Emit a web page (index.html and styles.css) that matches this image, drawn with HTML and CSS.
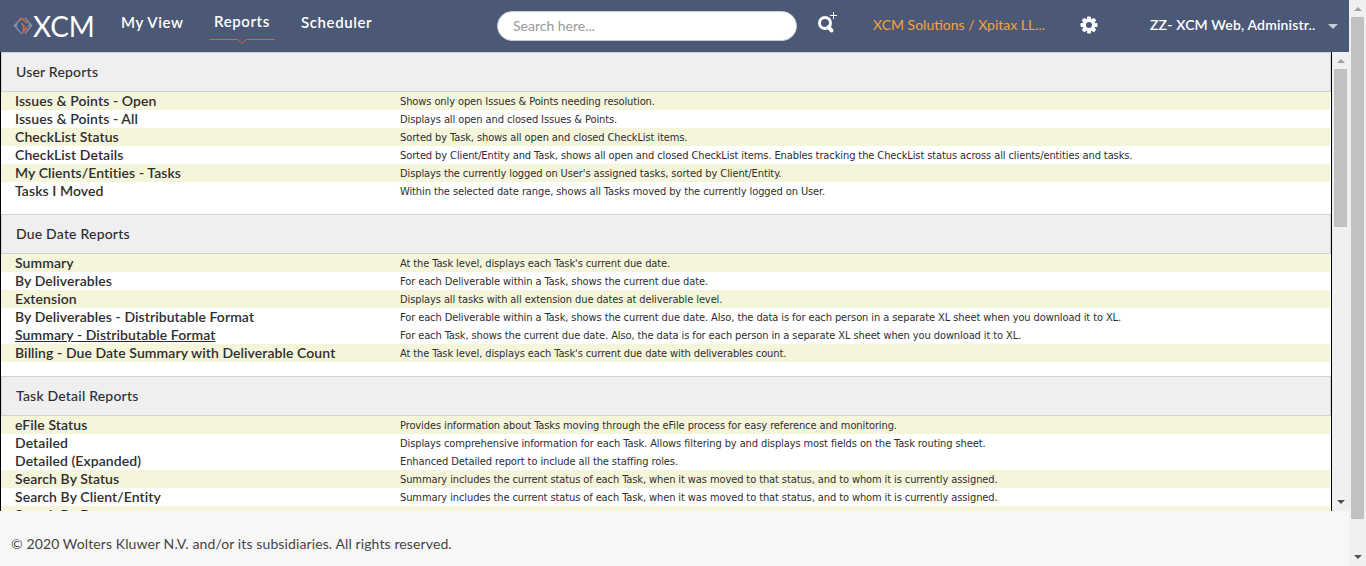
FILE: index.html
```html
<!DOCTYPE html>
<html lang="en">
<head>
<meta charset="utf-8">
<title>Reports</title>
<link rel="stylesheet" href="styles.css">
</head>
<body>
<div class="page">
  <header class="topbar">
    <div class="logo">
      <svg width="20" height="22" viewBox="0 0 20 22"><g fill="none"><path d="M8.500 3 1.500 10.500l7 8M12 3l6.500 7.500-6.500 8M1.500 10.500h5M14 10.500h4.500" stroke="#8b909c" stroke-width="1.400"/><path d="M10 6l4 4.500-4 6" stroke="#285b8c" stroke-width="2"/><path d="M9 6l-3.500 5 3.500 6" stroke="#285b8c" stroke-width="2"/><path d="M6 6l3-2.500 5 5M8 8l3 3-1 6 4-5" stroke="#dc6042" stroke-width="1.600"/></g></svg>
      <span class="logo-text">XCM</span>
    </div>
    <nav class="nav">
      <a class="nav-item view"><span>My View</span></a>
      <a class="nav-item active"><span>Reports</span><svg class="marker" width="66" height="6" viewBox="0 0 66 6"><path d="M0 .5h28.500l4.500 4 4.500-4H66" fill="none" stroke="#dc6042"/></svg></a>
      <a class="nav-item sched"><span>Scheduler</span></a>
    </nav>
    <div class="search">Search here...</div>
    <svg class="find" width="22" height="24" viewBox="0 0 22 24"><g fill="none" stroke="#fff"><circle cx="9" cy="13" r="5.500" stroke-width="3"/><path d="M12.500 17l3 3.500" stroke-width="4" stroke-linecap="round"/><path d="M17.500 2v7M14 5.500h7"/></g></svg>
    <div class="company">XCM Solutions / Xpitax LL...</div>
    <svg class="gear" width="18" height="18" viewBox="0 0 18 18"><g fill="#fff"><g id="teeth"><rect x="7" y="0.500" width="4" height="17" rx="1"/><rect x="0.500" y="7" width="17" height="4" rx="1"/></g><use href="#teeth" transform="rotate(45 9 9)"/><circle cx="9" cy="9" r="6.500"/></g><circle cx="9" cy="9" r="3" fill="#4c5976"/></svg>
    <div class="user">ZZ- XCM Web, Administr..</div>
    <i class="caret"></i>
  </header>

  <main class="frame">
    <div class="reports">
      <section class="group">
        <h2>User Reports</h2>
        <div class="row"><a>Issues &amp; Points - Open</a><p>Shows only open Issues &amp; Points needing resolution.</p></div>
        <div class="row"><a>Issues &amp; Points - All</a><p>Displays all open and closed Issues &amp; Points.</p></div>
        <div class="row"><a>CheckList Status</a><p>Sorted by Task, shows all open and closed CheckList items.</p></div>
        <div class="row"><a>CheckList Details</a><p>Sorted by Client/Entity and Task, shows all open and closed CheckList items. Enables tracking the CheckList status across all clients/entities and tasks.</p></div>
        <div class="row"><a>My Clients/Entities - Tasks</a><p>Displays the currently logged on User's assigned tasks, sorted by Client/Entity.</p></div>
        <div class="row"><a>Tasks I Moved</a><p>Within the selected date range, shows all Tasks moved by the currently logged on User.</p></div>
      </section>
      <section class="group">
        <h2>Due Date Reports</h2>
        <div class="row"><a>Summary</a><p>At the Task level, displays each Task's current due date.</p></div>
        <div class="row"><a>By Deliverables</a><p>For each Deliverable within a Task, shows the current due date.</p></div>
        <div class="row"><a>Extension</a><p>Displays all tasks with all extension due dates at deliverable level.</p></div>
        <div class="row"><a>By Deliverables - Distributable Format</a><p>For each Deliverable within a Task, shows the current due date. Also, the data is for each person in a separate XL sheet when you download it to XL.</p></div>
        <div class="row hover"><a>Summary - Distributable Format</a><p>For each Task, shows the current due date. Also, the data is for each person in a separate XL sheet when you download it to XL.</p></div>
        <div class="row shaded"><a>Billing - Due Date Summary with Deliverable Count</a><p>At the Task level, displays each Task's current due date with deliverables count.</p></div>
      </section>
      <section class="group">
        <h2>Task Detail Reports</h2>
        <div class="row"><a>eFile Status</a><p>Provides information about Tasks moving through the eFile process for easy reference and monitoring.</p></div>
        <div class="row"><a>Detailed</a><p>Displays comprehensive information for each Task. Allows filtering by and displays most fields on the Task routing sheet.</p></div>
        <div class="row plain"><a>Detailed (Expanded)</a><p>Enhanced Detailed report to include all the staffing roles.</p></div>
        <div class="row shaded"><a>Search By Status</a><p>Summary includes the current status of each Task, when it was moved to that status, and to whom it is currently assigned.</p></div>
        <div class="row plain"><a>Search By Client/Entity</a><p>Summary includes the current status of each Task, when it was moved to that status, and to whom it is currently assigned.</p></div>
        <div class="row shaded"><a>Search By Due</a><p>Includes the search by date for performance within the due date range and the total number of tasks for the client.</p></div>
      </section>
    </div>
    <div class="scrollbar inner"><i class="up"></i><b class="thumb"></b><i class="down"></i></div>
  </main>
  <footer class="footer"><span>© 2020 Wolters Kluwer N.V. and/or its subsidiaries. All rights reserved.</span></footer>
</div>
<div class="scrollbar outer"><i class="up"></i><b class="thumb"></b><i class="down"></i></div>
</body>
</html>
```
FILE: styles.css
```css
* { box-sizing: border-box; }
body { margin: 0; width: 1366px; height: 566px; overflow: hidden; display: flex; background: #f7f7f7; font-family: Lato, sans-serif; color: #2e2e2e; }
.page { width: 1349px; height: 566px; display: flex; flex-direction: column; }
.topbar { height: 52px; background: #4c5976; display: flex; align-items: flex-start; color: #fff; white-space: nowrap; flex: none; }
.logo { display: flex; width: 121px; padding: 15px 0 0 13px; }
.logo-text { font-size: 28px; line-height: 22px; letter-spacing: -0.2px; }
.nav { display: flex; width: 376px; font-size: 15px; font-weight: 600; line-height: 18px; letter-spacing: 0.6px; }
.nav-item { display: flex; flex-direction: column; padding-top: 13px; }
.view { width: 88px; }
.active { width: 92px; padding-top: 12px; }
.active span { padding-left: 5px; }
.marker { margin-top: 9px; }
.search { width: 300px; height: 30px; margin-top: 11px; border-radius: 15px; background: #fff; border: 1px solid #c8ccd6; color: #999; font-size: 14px; line-height: 28px; padding-left: 15px; }
.find { margin: 10px 0 0 19px; width: 22px; }
.company { width: 207px; margin-left: 35px; padding-top: 16px; font-size: 14px; line-height: 18px; color: #f2a43c; }
.gear { margin-top: 16px; }
.user { width: 178px; margin-left: 52px; padding-top: 16px; font-size: 14px; line-height: 18px; font-weight: 600; letter-spacing: 0.15px; }
.caret { margin-top: 24px; border: 5px solid transparent; border-top-color: #c9cdd6; border-bottom: 0; }
.frame { height: 459px; display: flex; background: #fff; overflow: hidden; flex: none; }
.reports { width: 1332px; border: solid #000; border-width: 0 1px; }
.group { height: 162px; }
.group h2 { height: 40px; margin: 0; border: 1px solid #d2d2d2; background: #efefef; padding-left: 14px; font-size: 14px; line-height: 37px; font-weight: 500; letter-spacing: 0.2px; }
.row { height: 18px; margin-right: 1px; display: flex; white-space: nowrap; line-height: 18px; }
.row:nth-child(even), .row.shaded { background: #f5f5dc; }
.row.hover, .row.plain { background: #fff; }
.row a { width: 385px; margin-left: 14px; font-size: 14px; font-weight: 600; letter-spacing: 0.08px; flex: none; }
.row.hover { display: grid; grid-template-columns: 399px auto; justify-content: start; }
.row.hover a { width: auto; justify-self: start; text-decoration: underline; }
.row p { margin: 0; font-family: "DejaVu Sans Condensed", "DejaVu Sans", sans-serif; font-stretch: condensed; font-size: 11px; line-height: 20px; height: 18px; letter-spacing: -0.1px; }
.scrollbar { width: 17px; background: #f0f0f0; display: flex; flex-direction: column; align-items: center; flex: none; }
.thumb { width: 13px; background: #c1c1c1; }
.inner .thumb { height: 158px; }
.outer .thumb { height: 502px; }
.up, .down { border: 4px solid transparent; flex: none; }
.up { border-top: 0; border-bottom-color: #a0a0a0; margin: 7px 0 6px; }
.down { border-bottom: 0; border-top-color: #505050; margin: auto 0 7px; }
.footer { padding: 24px 0 0 11px; font-size: 14px; line-height: 18px; letter-spacing: 0.11px; color: #454545; }
```
